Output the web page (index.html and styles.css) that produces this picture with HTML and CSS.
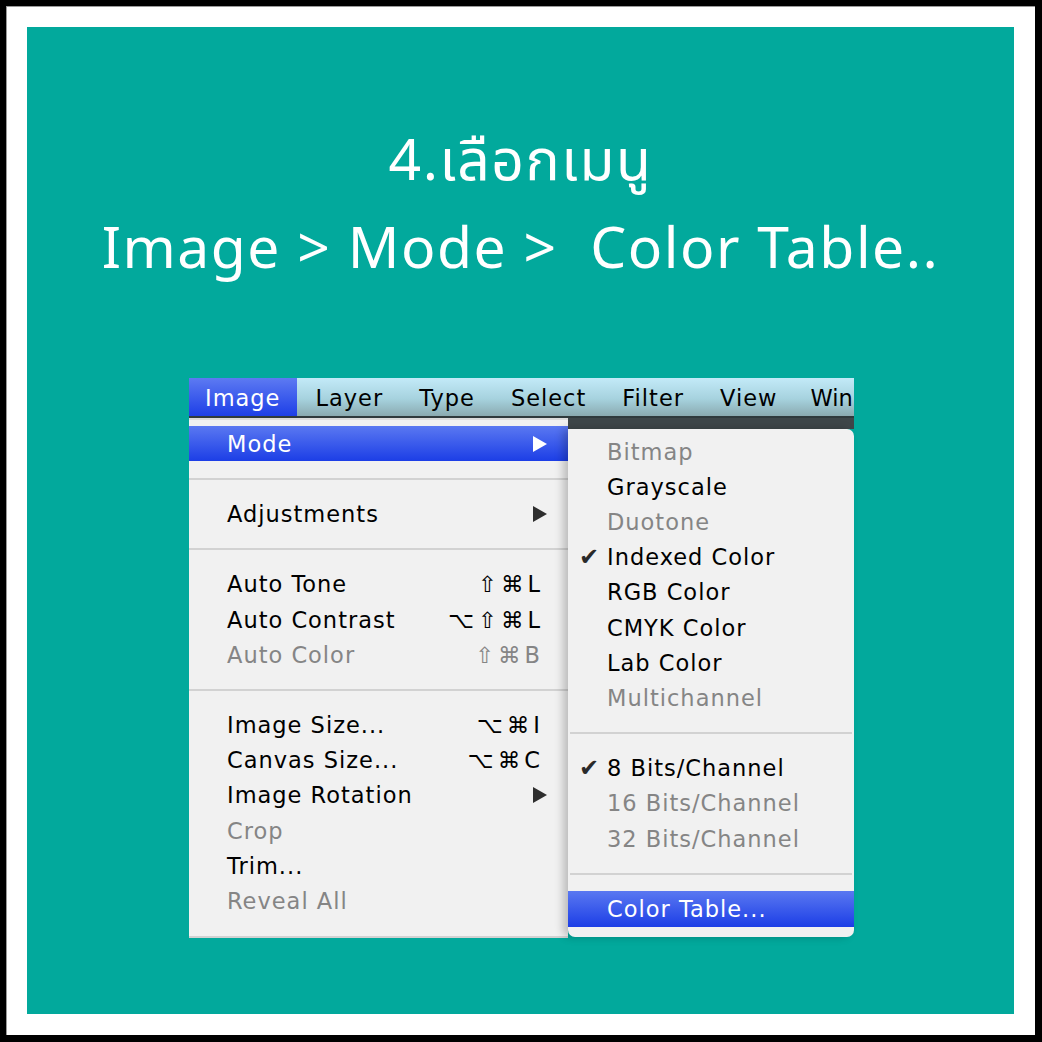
FILE: index.html
```html
<!DOCTYPE html>
<html lang="th">
<head>
  <meta charset="UTF-8">
  <title>4.เลือกเมนู Image &gt; Mode &gt; Color Table</title>
  <link rel="stylesheet" href="styles.css">
</head>
<body>
  <div class="frame">
    <main class="card">
      <h1 class="title">
        <span class="line">4.เลือกเมนู</span>
        <span class="line">Image &gt; Mode &gt;&nbsp; Color Table..</span>
      </h1>

      <section class="shot">
        <div class="menubar">
          <span class="bar-item active">Image</span>
          <span class="bar-item">Layer</span>
          <span class="bar-item">Type</span>
          <span class="bar-item">Select</span>
          <span class="bar-item">Filter</span>
          <span class="bar-item">View</span>
          <span class="bar-item last">Win</span>
        </div>
        <div class="menus">
          <ul class="menu main-menu">
            <li class="item hl">Mode<span class="arrow white"></span></li>
            <li class="sep"></li>
            <li class="item">Adjustments<span class="arrow"></span></li>
            <li class="sep"></li>
            <li class="item">Auto Tone<span class="keys">⇧⌘L</span></li>
            <li class="item">Auto Contrast<span class="keys">⌥⇧⌘L</span></li>
            <li class="item off">Auto Color<span class="keys">⇧⌘B</span></li>
            <li class="sep"></li>
            <li class="item">Image Size...<span class="keys">⌥⌘I</span></li>
            <li class="item">Canvas Size...<span class="keys">⌥⌘C</span></li>
            <li class="item">Image Rotation<span class="arrow"></span></li>
            <li class="item off">Crop</li>
            <li class="item">Trim...</li>
            <li class="item off">Reveal All</li>
            <li class="sep last"></li>
          </ul>
          <div class="sub-col">
            <ul class="menu sub-menu">
              <li class="item off"><span class="check"></span>Bitmap</li>
              <li class="item"><span class="check"></span>Grayscale</li>
              <li class="item off"><span class="check"></span>Duotone</li>
              <li class="item"><span class="check">✔</span>Indexed Color</li>
              <li class="item"><span class="check"></span>RGB Color</li>
              <li class="item"><span class="check"></span>CMYK Color</li>
              <li class="item"><span class="check"></span>Lab Color</li>
              <li class="item off"><span class="check"></span>Multichannel</li>
              <li class="sep"></li>
              <li class="item"><span class="check">✔</span>8 Bits/Channel</li>
              <li class="item off"><span class="check"></span>16 Bits/Channel</li>
              <li class="item off"><span class="check"></span>32 Bits/Channel</li>
              <li class="sep"></li>
              <li class="item hl"><span class="check"></span>Color Table...</li>
            </ul>
          </div>
        </div>
      </section>
    </main>
  </div>
</body>
</html>
```

FILE: styles.css
```css
*{
  margin: 0;
  padding: 0;
  box-sizing: border-box;
}
body{
  background: #000;
  width: 1042px;
  height: 1042px;
  padding: 6px 7px 7px 6px;
}
.frame{
  width: 1029px;
  height: 1029px;
  background: #fff;
  border-left: 1px solid #9a9a9a;
  border-top: 1px solid #9a9a9a;
  padding: 20px 21px 21px 20px;
}
.card{
  width: 987px;
  height: 987px;
  background: #02a99c;
  padding-top: 92px;
}
.title{
  font-family: "Noto Sans Thai", "Noto Sans", "DejaVu Sans", sans-serif;
  font-weight: 400;
  font-size: 57px;
  letter-spacing: 1.5px;
  line-height: 88px;
  color: #fff;
  text-align: center;
}
.title .line{
  display: block;
}

/* screenshot of the photoshop menu */
.shot{
  width: 665px;
  margin: 83px 0 0 162px;
  font-family: "DejaVu Sans", sans-serif;
  font-size: 22.5px;
  letter-spacing: 1px;
}
.menubar{
  height: 40px;
  display: flex;
  overflow: hidden;
  white-space: nowrap;
  background: linear-gradient(#c3eaf8, #a6d2de 55%, #8aaab0);
  border-bottom: 2px solid #2f3a3c;
}
.bar-item{
  padding: 0 18px;
  line-height: 40px;
  color: #000;
}
.bar-item.active{
  padding: 0 17px 0 16px;
  background: linear-gradient(#5d7af2, #1d3fe7);
  color: #fff;
}
.bar-item.last{
  padding: 0 0 0 15px;
  letter-spacing: 0;
}
.menus{
  display: flex;
}
.menu{
  list-style: none;
  background: #f1f1f1;
}
.main-menu{
  width: 379px;
  padding-top: 6px;
  border-top: 2px solid #dcdcdc;
}
.item{
  height: 35.2px;
  display: flex;
  align-items: center;
  color: #000;
}
.main-menu .item{
  padding: 0 28px 0 38px;
}
.item.off{
  color: #858585;
}
.item.hl{
  color: #fff;
  background: linear-gradient(#5a78f1, #1c3ee6);
}
.keys{
  margin-left: auto;
  letter-spacing: 4px;
  margin-right: -4px;
}
.arrow{
  margin-left: auto;
  margin-right: -7px;
  width: 0;
  height: 0;
  border-top: 8px solid transparent;
  border-bottom: 8px solid transparent;
  border-left: 14px solid #2e2e2e;
}
.arrow.white{
  border-left-color: #fff;
}
.sep{
  height: 35.2px;
  display: flex;
  align-items: center;
}
.sep::after{
  content: '';
  flex: 1;
  height: 2px;
  background: #d2d2d2;
}
.sep.last{
  height: 19px;
  align-items: flex-end;
}
.sub-col{
  width: 286px;
  padding-top: 11px;
  background: linear-gradient(#3e4649 0 11px, transparent 11px);
}
.sub-menu{
  border-radius: 0 7px 7px 7px;
  padding: 5px 0 10px;
  box-shadow: -5px 0 9px rgba(0, 0, 0, 0.22);
}
.sub-menu .sep{
  padding: 0 2px;
}
.check{
  width: 39px;
  flex-shrink: 0;
  padding-left: 11px;
  font-size: 24px;
  color: #2a2a2a;
  letter-spacing: 0;
}
```
